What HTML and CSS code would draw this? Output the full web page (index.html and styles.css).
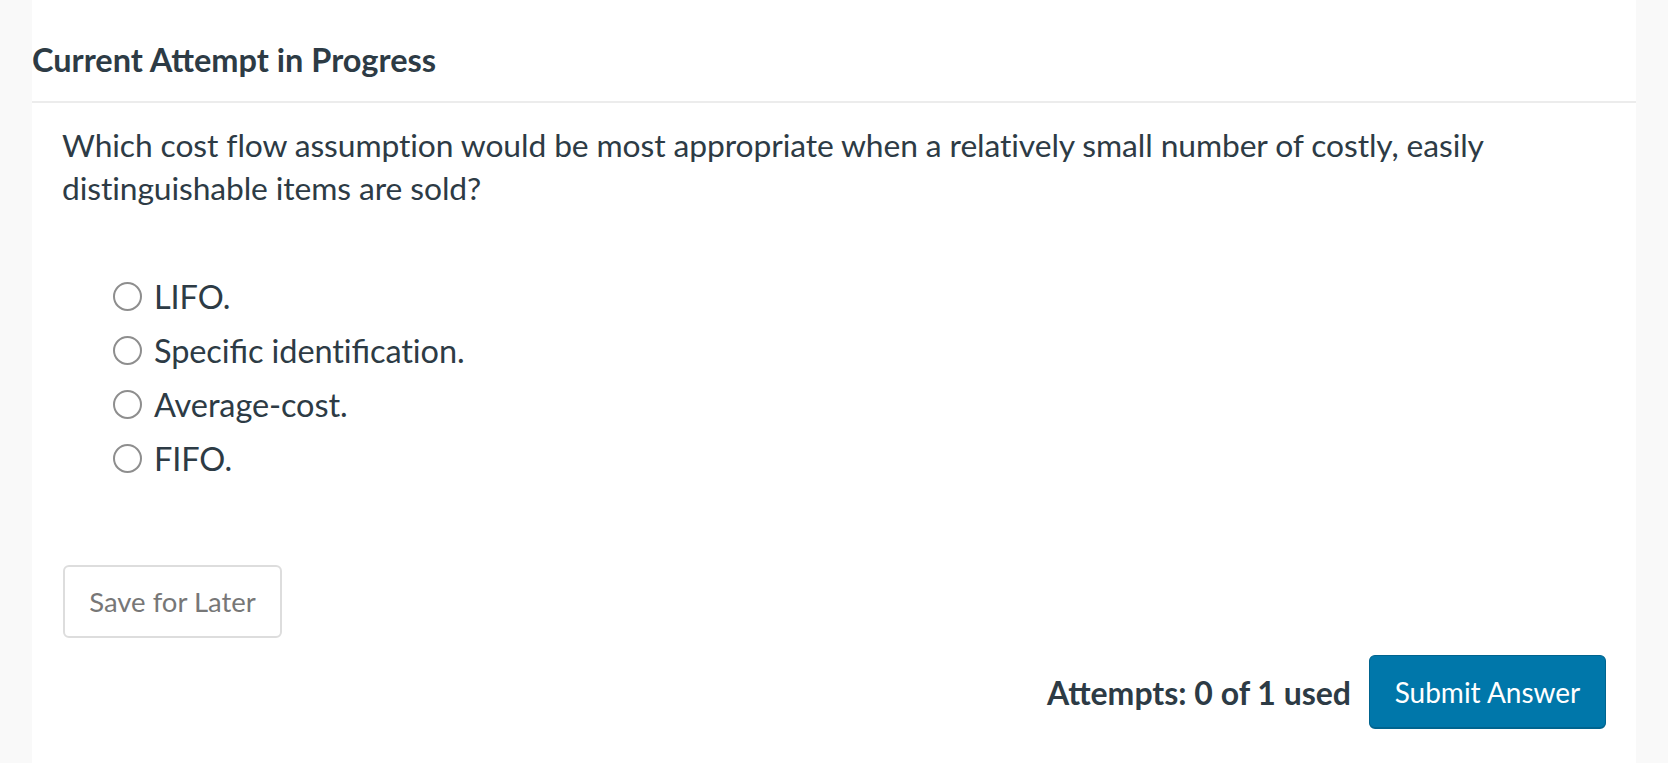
FILE: index.html
```html
<!DOCTYPE html>
<html lang="en">
<head>
<meta charset="utf-8">
<title>Current Attempt in Progress</title>
<link rel="stylesheet" href="styles.css">
</head>
<body>
<div class="page">
  <main class="panel">
    <header class="panel-header">
      <h2 class="title">Current Attempt in Progress</h2>
    </header>
    <section class="question">
      <p class="question-text">Which cost flow assumption would be most appropriate when a relatively small number of costly, easily distinguishable items are sold?</p>
      <ul class="options">
        <li class="option"><span class="radio"></span><span class="label">LIFO.</span></li>
        <li class="option"><span class="radio"></span><span class="label">Speciﬁc identiﬁcation.</span></li>
        <li class="option"><span class="radio"></span><span class="label">Average-cost.</span></li>
        <li class="option"><span class="radio"></span><span class="label">FIFO.</span></li>
      </ul>
      <div class="save-row">
        <button class="btn-save" type="button">Save for Later</button>
      </div>
      <div class="submit-row">
        <span class="attempts">Attempts: 0 of 1 used</span>
        <button class="btn-submit" type="button">Submit Answer</button>
      </div>
    </section>
  </main>
</div>
</body>
</html>
```
FILE: styles.css
```css
html, body {
  margin: 0;
  padding: 0;
  height: 100%;
}
body {
  background: #f9f9f9;
  font-family: Lato, "Noto Sans", sans-serif;
  color: #2d3b45;
}
.page {
  display: flex;
  height: 100%;
}
.panel {
  margin-left: 32px;
  width: 1604px;
  background: #ffffff;
  min-height: 100%;
}
.panel-header {
  height: 101px;
  border-bottom: 2px solid #ececec;
  display: flex;
  align-items: center;
}
.title {
  margin: 0;
  padding-top: 18px;
  font-size: 32.5px;
  font-weight: 700;
  color: #2d3b45;
}
.question {
  padding: 21px 30px 0 30px;
}
.question-text {
  margin: 0;
  font-size: 31.8px;
  line-height: 43px;
  letter-spacing: -0.1px;
  max-width: 1500px;
}
.options {
  list-style: none;
  margin: 59px 0 0 0;
  padding: 0 0 0 51px;
  display: flex;
  flex-direction: column;
}
.option {
  display: flex;
  align-items: center;
  height: 54px;
  font-size: 32.5px;
}
.radio {
  flex: none;
  width: 29px;
  height: 29px;
  border: 2.5px solid #8e8e8e;
  border-radius: 50%;
  margin-right: 12px;
  box-sizing: border-box;
}
.label {
  letter-spacing: -0.1px;
}
.save-row {
  margin-top: 80px;
}
.btn-save {
  font-family: Lato, "Noto Sans", sans-serif;
  font-size: 27.5px;
  color: #777777;
  background: #ffffff;
  border: 2px solid #dddddd;
  border-radius: 6px;
  width: 219px;
  height: 73px;
  padding: 0;
  margin-left: 1px;
}
.submit-row {
  display: flex;
  justify-content: flex-end;
  align-items: center;
  gap: 18px;
  margin-top: 17px;
}
.attempts {
  font-size: 32px;
  font-weight: 700;
}
.btn-submit {
  font-family: Lato, "Noto Sans", sans-serif;
  font-size: 28px;
  color: #ffffff;
  background: #0077aa;
  border: 1px solid #00648f;
  border-bottom-width: 2px;
  border-radius: 6px;
  width: 237px;
  height: 74px;
  padding: 0;
}
```
